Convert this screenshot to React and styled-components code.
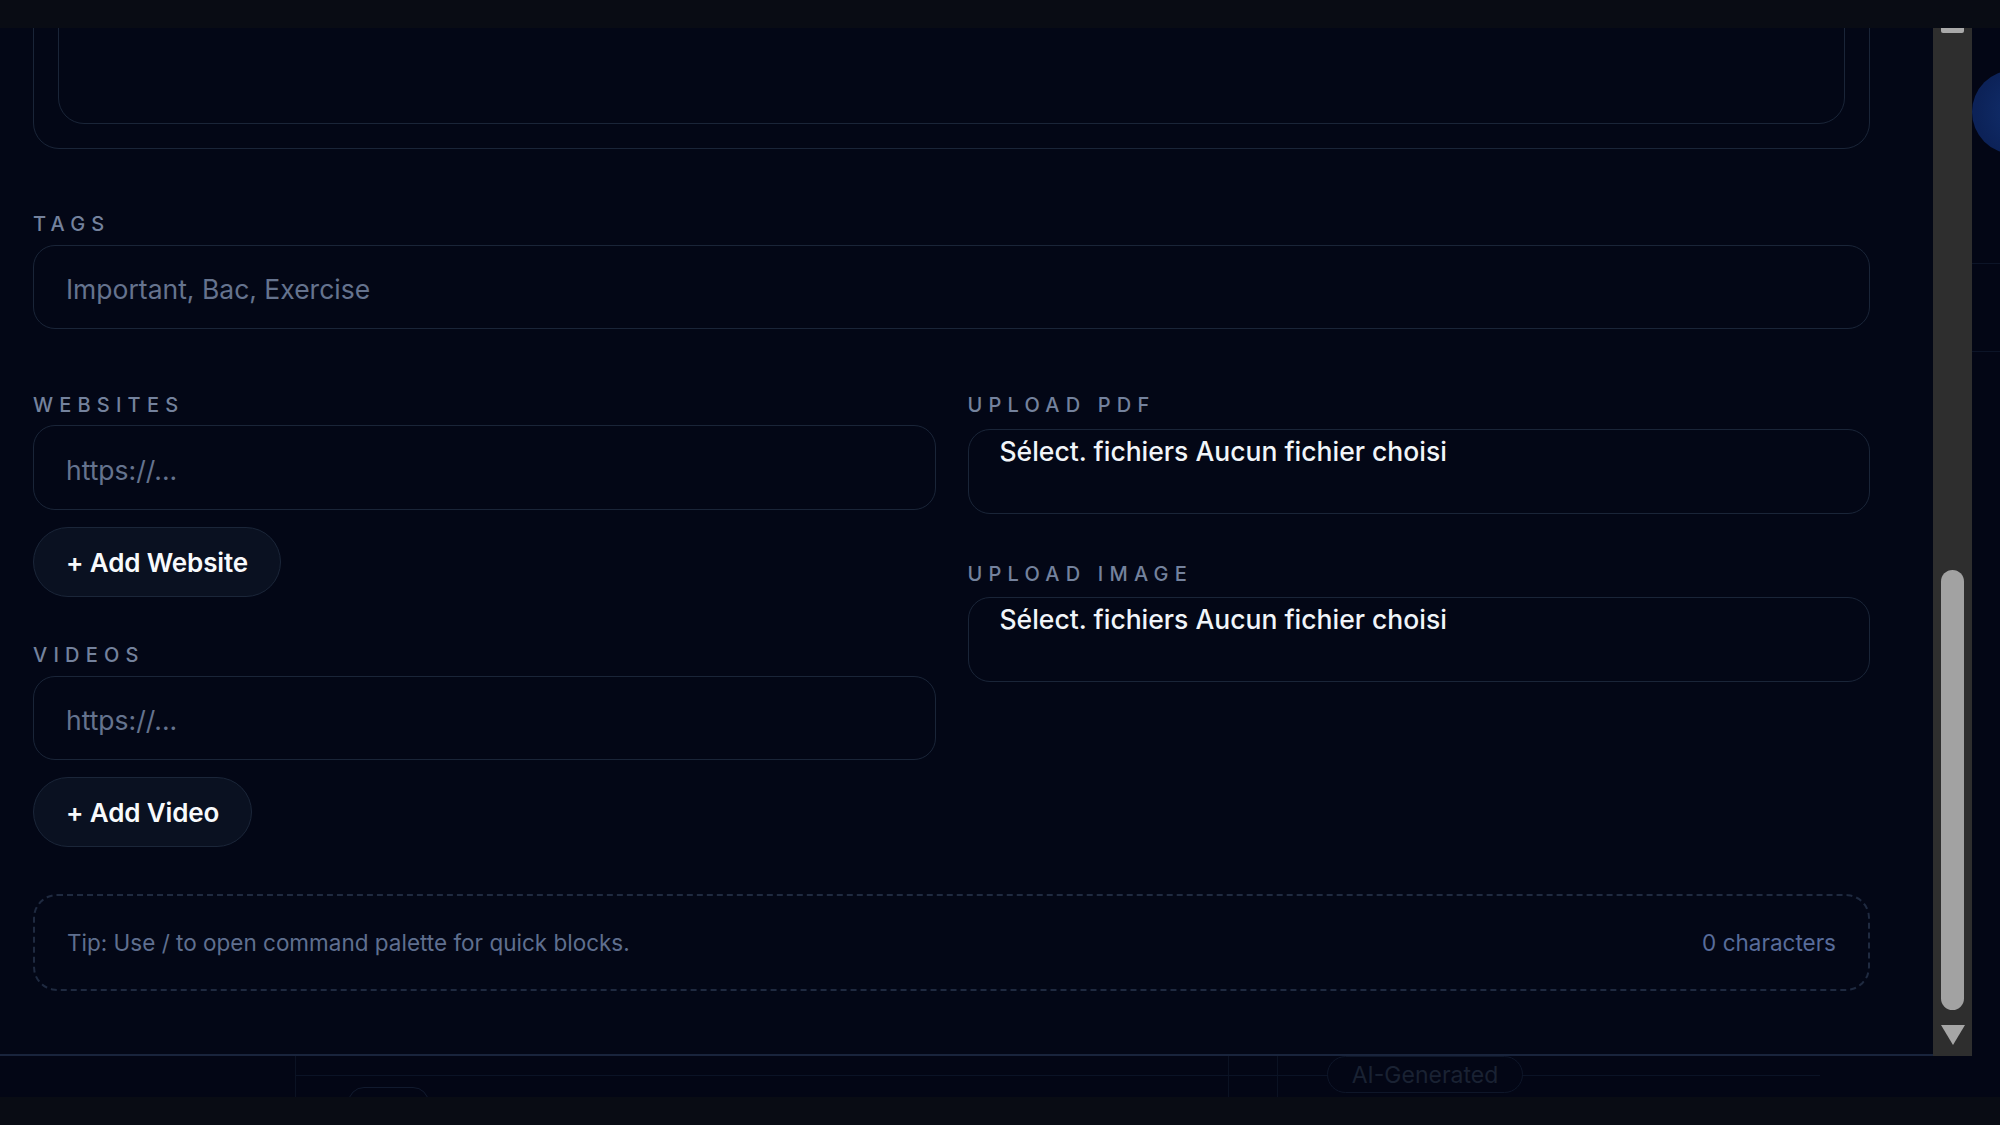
import styled, { createGlobalStyle } from "styled-components";

const GlobalStyle = createGlobalStyle`
  html, body {
    margin: 0;
    padding: 0;
    background: #030716;
  }
  body {
    font-family: Inter, "Noto Sans", sans-serif;
  }
  * {
    box-sizing: border-box;
  }
`;

const Screen = styled.div`
  width: 2000px;
  height: 1125px;
  display: flex;
  flex-direction: column;
  overflow: hidden;
  background: #030716;
`;

const EdgeBar = styled.div`
  height: 28px;
  flex-shrink: 0;
  background: #090c14;
`;

const Stage = styled.div`
  display: flex;
  height: 1028px;
  flex-shrink: 0;
`;

const Modal = styled.div`
  width: 1933px;
  flex-shrink: 0;
  overflow: hidden;
  padding: 0 63px 0 33px;
  background: #030716;
  border-bottom: 2px solid #19243c;
`;

const EditorCard = styled.div`
  margin-top: -179px;
  height: 300px;
  padding: 24px;
  border: 1px solid #1a2538;
  border-radius: 26px;
`;

const EditorInner = styled.div`
  height: 100%;
  border: 1px solid #1a2538;
  border-radius: 26px;
`;

const Label = styled.div`
  margin-top: ${(p) => p.$mt || 0}px;
  height: 26px;
  line-height: 28px;
  font-size: 20px;
  font-weight: 500;
  letter-spacing: 0.31em;
  text-transform: uppercase;
  color: #74829d;
`;

const TextInput = styled.input`
  display: block;
  width: 100%;
  height: ${(p) => p.$h || 84}px;
  margin-top: ${(p) => p.$mt || 8}px;
  padding: 4px 32px 0;
  border: 1px solid #1a2538;
  border-radius: 22px;
  background: transparent;
  font-family: inherit;
  font-size: 26.5px;
  color: #e2e8f0;
  outline: none;

  &::placeholder {
    color: #65738e;
  }
`;

const Grid = styled.div`
  margin-top: 62px;
  display: grid;
  grid-template-columns: 1fr 1fr;
  column-gap: 32px;
`;

const Column = styled.div`
  display: flex;
  flex-direction: column;
  align-items: flex-start;
`;

const AddButton = styled.button`
  margin-top: 17px;
  height: 70px;
  padding: 0 32px;
  border: 1.5px solid #1b2639;
  border-radius: 999px;
  background: #0a1121;
  font-family: inherit;
  font-size: 26px;
  font-weight: 600;
  letter-spacing: -0.005em;
  color: #f8fafc;
`;

const FileBox = styled.div`
  width: 100%;
  height: 85px;
  margin-top: ${(p) => p.$mt || 12}px;
  padding: 6px 31px 0;
  border: 1px solid #1a2538;
  border-radius: 22px;
  font-size: 26.5px;
  font-weight: 500;
  line-height: 30px;
  white-space: nowrap;
  color: #f1f5f9;
`;

const TipBox = styled.div`
  margin-top: 47px;
  height: 97px;
  padding: 0 32px;
  display: flex;
  align-items: center;
  justify-content: space-between;
  border: 2px dashed #1f2a40;
  border-radius: 24px;
  font-size: 22.5px;
  color: #5f6f8f;
`;

const Counter = styled.span`
  color: #586c9a;
`;

const Scrollbar = styled.div`
  width: 39px;
  flex-shrink: 0;
  display: flex;
  flex-direction: column;
  align-items: center;
  background: #2e2e2e;
`;

const UpNub = styled.div`
  width: 23px;
  height: 5px;
  background: #a9a9a9;
  border-radius: 0 0 2px 2px;
`;

const Thumb = styled.div`
  margin-top: 537px;
  width: 23px;
  height: 440px;
  border-radius: 12px;
  background: #a2a2a2;
`;

const DownArrow = styled.div`
  margin-top: 15px;
  width: 0;
  height: 0;
  border-left: 12px solid transparent;
  border-right: 12px solid transparent;
  border-top: 20px solid #a6a6a6;
`;

const PageSliver = styled.div`
  position: relative;
  flex: 1;
  overflow: hidden;
  background: #030615;
`;

const Avatar = styled.div`
  position: absolute;
  left: 0;
  top: 42px;
  width: 84px;
  height: 84px;
  border-radius: 50%;
  background: radial-gradient(circle at 60% 50%, #12306f, #0c2258 70%);
`;

const SliverCard = styled.div`
  margin-top: 235px;
  height: 89px;
  border-top: 1px solid #0c1427;
  border-bottom: 1px solid #0c1427;
`;

const BehindStrip = styled.div`
  height: 41px;
  flex-shrink: 0;
  display: flex;
  overflow: hidden;
  background: #030615;
`;

const StripBlank = styled.div`
  width: 295px;
  flex-shrink: 0;
`;

const StripPanel = styled.div`
  position: relative;
  flex: 1;
  display: flex;
  align-items: flex-start;
  border-left: 1px solid #0b1223;

  &::before {
    content: "";
    position: absolute;
    left: 0;
    right: 180px;
    top: 19px;
    border-top: 1px solid #0b1326;
  }
`;

const GhostTab = styled.div`
  position: relative;
  margin: 31px 0 0 52px;
  width: 81px;
  height: 30px;
  border: 1px solid #111a2e;
  border-radius: 16px 16px 0 0;
  background: #030615;
`;

const GhostRule = styled.div`
  margin-left: ${(p) => p.$ml}px;
  width: 1px;
  height: 100%;
  background: #0b1223;
`;

const GhostPill = styled.div`
  position: relative;
  margin: 0 0 0 49px;
  width: 196px;
  height: 37px;
  display: flex;
  align-items: center;
  justify-content: center;
  border: 1px solid #0e1629;
  border-radius: 20px;
  background: #030615;
  font-size: 23px;
  color: #1a2233;
`;

export default function App() {
  return (
    <Screen>
      <GlobalStyle />
      <EdgeBar />
      <Stage>
        <Modal>
          <EditorCard>
            <EditorInner />
          </EditorCard>

          <Label $mt={61}>Tags</Label>
          <TextInput $mt={9} placeholder="Important, Bac, Exercise" />

          <Grid>
            <Column>
              <Label>Websites</Label>
              <TextInput $h={85} placeholder="https://..." />
              <AddButton>+ Add Website</AddButton>

              <Label $mt={44}>Videos</Label>
              <TextInput $mt={9} placeholder="https://..." />
              <AddButton>+ Add Video</AddButton>
            </Column>

            <Column>
              <Label>Upload PDF</Label>
              <FileBox>Sélect. fichiers Aucun fichier choisi</FileBox>

              <Label $mt={46}>Upload Image</Label>
              <FileBox $mt={11}>Sélect. fichiers Aucun fichier choisi</FileBox>
            </Column>
          </Grid>

          <TipBox>
            <span>Tip: Use / to open command palette for quick blocks.</span>
            <Counter>0 characters</Counter>
          </TipBox>
        </Modal>

        <Scrollbar>
          <UpNub />
          <Thumb />
          <DownArrow />
        </Scrollbar>

        <PageSliver>
          <Avatar />
          <SliverCard />
        </PageSliver>
      </Stage>

      <BehindStrip>
        <StripBlank />
        <StripPanel>
          <GhostTab />
          <GhostRule $ml={799} />
          <GhostRule $ml={48} />
          <GhostPill>AI-Generated</GhostPill>
        </StripPanel>
      </BehindStrip>

      <EdgeBar />
    </Screen>
  );
}
